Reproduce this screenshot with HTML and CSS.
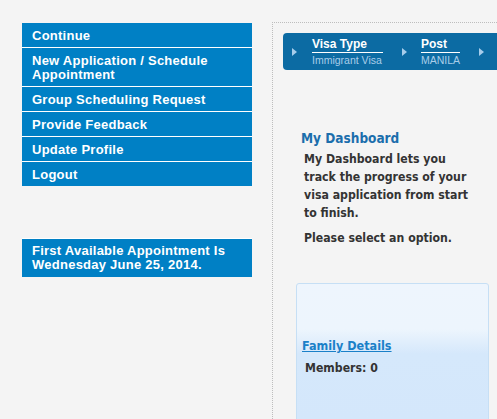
FILE: index.html
```html
<!DOCTYPE html>
<html lang="en">
<head>
    <meta charset="UTF-8">
    <title>My Dashboard</title>
    <link rel="stylesheet" href="styles.css">
</head>
<body>
    <div class="page">
        <div class="sidebar">
            <ul class="menu">
                <li>Continue</li>
                <li>New Application / Schedule Appointment</li>
                <li>Group Scheduling Request</li>
                <li>Provide Feedback</li>
                <li>Update Profile</li>
                <li>Logout</li>
            </ul>
            <div class="first-appt">First Available Appointment Is Wednesday June 25, 2014.</div>
        </div>

        <div class="main">
            <div class="crumbs">
                <span class="arrow"></span>
                <div class="crumb crumb-visa">
                    <div class="crumb-title">Visa Type</div>
                    <div class="crumb-value">Immigrant Visa</div>
                </div>
                <span class="arrow"></span>
                <div class="crumb crumb-post">
                    <div class="crumb-title">Post</div>
                    <div class="crumb-value">MANILA</div>
                </div>
                <span class="arrow"></span>
            </div>

            <div class="dashboard">
                <h2>My Dashboard</h2>
                <p>My Dashboard lets you track the progress of your visa application from start to finish.</p>
                <p>Please select an option.</p>
            </div>

            <div class="family-box">
                <a href="#" class="family-link">Family Details</a>
                <div class="members">Members: 0</div>
            </div>
        </div>
    </div>
</body>
</html>
```

FILE: styles.css
```css
body {
    margin: 0;
    background-color: #f4f4f4;
    font-family: "Liberation Sans", Arial, sans-serif;
    overflow: hidden;
}
.page {
    display: flex;
    height: 419px;
}
.sidebar {
    width: 230px;
    padding: 23px 0 0 22px;
    flex-shrink: 0;
}
.menu {
    list-style: none;
    margin: 0;
    padding: 0;
}
.menu li {
    background-color: #0080c5;
    color: #fff;
    font-weight: bold;
    font-size: 13px;
    letter-spacing: 0.25px;
    line-height: 14px;
    padding: 6px 10px 4px 10px;
    border-bottom: 1px solid #fff;
}
.menu li:last-child {
    border-bottom: none;
}
.first-appt {
    margin-top: 52px;
    border-top: 1px solid #fff;
    background-color: #0080c5;
    color: #fff;
    font-weight: bold;
    font-size: 13px;
    letter-spacing: 0.25px;
    line-height: 14px;
    padding: 5px 10px 5px 10px;
}
.main {
    margin-left: 20px;
    margin-top: 22px;
    flex: 1;
    border-left: 1px dotted #bdbdbd;
    border-top: 1px dotted #bdbdbd;
    padding: 10px 0 0 10px;
    min-width: 0;
}
.crumbs {
    display: flex;
    align-items: center;
    height: 37px;
    background-color: #0c6ba3;
    border-radius: 4px 0 0 4px;
    margin-right: -20px;
    padding-left: 9px;
}
.arrow {
    width: 0;
    height: 0;
    border-top: 4px solid transparent;
    border-bottom: 4px solid transparent;
    border-left: 5px solid #a7cdeb;
}
.crumb {
    margin: 0 19px 0 15px;
    white-space: nowrap;
}
.crumb-post {
    margin-left: 14px;
}
.crumb-title {
    color: #fff;
    font-weight: bold;
    font-size: 12px;
    line-height: 14px;
    border-bottom: 1px solid #fff;
    padding-bottom: 1px;
}
.crumb-value {
    color: #a9cde9;
    font-size: 10.5px;
    line-height: 13px;
    padding-top: 1px;
}
.crumb-visa {
    width: 71px;
}
.dashboard {
    padding: 59px 10px 0 18px;
    font-family: "DejaVu Sans Condensed", "DejaVu Sans", sans-serif;
}
.dashboard h2 {
    margin: 0 0 3px 0;
    color: #1b6eac;
    font-size: 13.5px;
    line-height: 18px;
}
.dashboard p {
    margin: 0 0 7px 3px;
    color: #333;
    font-weight: bold;
    font-size: 12.2px;
    line-height: 18px;
    width: 172px;
}
.family-box {
    margin: 36px 8px 0 13px;
    height: 150px;
    border: 1px solid #c6dff5;
    border-radius: 3px;
    background: linear-gradient(#eef5fd 0px, #edf5fd 45px, #d5e8fb 70px, #d3e6fb 100%);
    padding: 51px 0 0 5px;
    font-family: "DejaVu Sans Condensed", "DejaVu Sans", sans-serif;
}
.family-link {
    color: #1a80c8;
    font-weight: bold;
    font-size: 12.5px;
}
.members {
    margin: 7px 0 0 3px;
    color: #333;
    font-weight: bold;
    font-size: 12.2px;
}
```
